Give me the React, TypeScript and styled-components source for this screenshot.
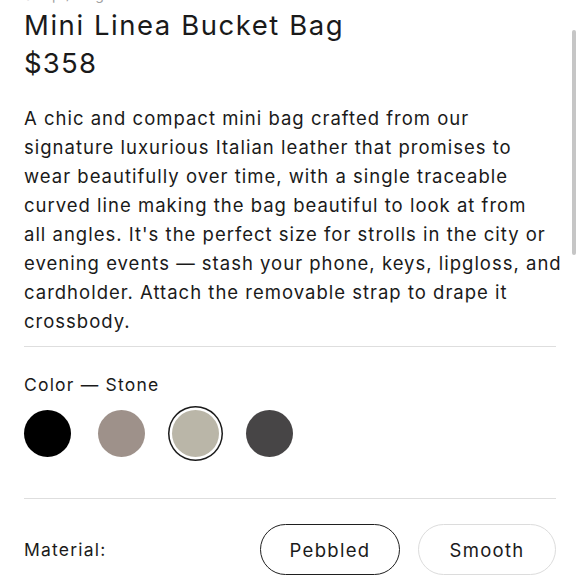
import React from "react";
import styled, { createGlobalStyle } from "styled-components";

const Global = createGlobalStyle`
  html, body { margin: 0; padding: 0; background: #fff; }
  body { font-family: Inter, "Noto Sans", sans-serif; color: #1a1a1a; overflow: hidden; }
  * { box-sizing: border-box; }
`;

const Page = styled.div`
  position: relative;
  width: 580px;
  height: 580px;
  overflow: hidden;
  padding: 0 24px;
`;

const Breadcrumb = styled.div`
  margin-top: -14px;
  font-size: 14px;
  line-height: 18px;
  letter-spacing: 0.8px;
  color: #a0a0a0;
`;

const Title = styled.h1`
  margin: 3px 0 0;
  font-size: 27.5px;
  font-weight: 400;
  line-height: 36px;
  letter-spacing: 1.55px;
`;

const Price = styled.div`
  font-size: 27.5px;
  line-height: 40px;
  letter-spacing: 1.2px;
`;

const Description = styled.p`
  margin: 21px 0 0;
  font-size: 18.5px;
  line-height: 29px;
  letter-spacing: 1px;
  width: 556px;
`;

const Divider = styled.hr`
  margin: 0;
  border: none;
  border-top: 1px solid #dedede;
  width: 532px;
`;

const Section = styled.div<{ $top: number; $bottom: number }>`
  padding-top: ${(p) => p.$top}px;
  padding-bottom: ${(p) => p.$bottom}px;
`;

const Label = styled.div`
  font-size: 17.5px;
  line-height: 22px;
  letter-spacing: 1.2px;
`;

const Swatches = styled.div`
  display: flex;
  gap: 27px;
  margin-top: 14px;
`;

const Swatch = styled.div<{ $color: string; $selected?: boolean }>`
  width: 47px;
  height: 47px;
  border-radius: 50%;
  background: ${(p) => p.$color};
  box-shadow: ${(p) =>
    p.$selected ? "0 0 0 2.5px #fff, 0 0 0 4px #1a1a1a" : "none"};
`;

const MaterialRow = styled.div`
  display: flex;
  align-items: center;
  justify-content: space-between;
  width: 532px;
`;

const Options = styled.div`
  display: flex;
  gap: 18px;
`;

const Pill = styled.button<{ $active?: boolean }>`
  width: ${(p) => (p.$active ? 140 : 138)}px;
  height: 51px;
  border-radius: 26px;
  background: #fff;
  border: ${(p) => (p.$active ? "1.5px solid #1f1f1f" : "1px solid #dcdcdc")};
  font-family: inherit;
  font-size: 18.5px;
  letter-spacing: 1.3px;
  color: #1a1a1a;
  padding: 0;
`;

const Scrollbar = styled.div`
  position: absolute;
  right: 4px;
  top: 30px;
  width: 4px;
  height: 225px;
  border-radius: 2px;
  background: #c6c6c6;
`;

export default function App() {
  return (
    <>
      <Global />
      <Page>
        <Breadcrumb>Shop / Bags</Breadcrumb>
        <Title>Mini Linea Bucket Bag</Title>
        <Price>$358</Price>
        <Description>
          A chic and compact mini bag crafted from our
          <br />
          signature luxurious Italian leather that promises to
          <br />
          wear beautifully over time, with a single traceable
          <br />
          curved line making the bag beautiful to look at from
          <br />
          all angles. It's the perfect size for strolls in the city or
          <br />
          evening events — stash your phone, keys, lipgloss, and
          <br />
          cardholder. Attach the removable strap to drape it
          <br />
          crossbody.
        </Description>
        <Section $top={10} $bottom={0}>
          <Divider />
        </Section>
        <Section $top={27} $bottom={41}>
          <Label>Color — Stone</Label>
          <Swatches>
            <Swatch $color="#000000" />
            <Swatch $color="#9e918a" />
            <Swatch $color="#bab6a8" $selected />
            <Swatch $color="#474546" />
          </Swatches>
        </Section>
        <Divider />
        <Section $top={25} $bottom={0}>
          <MaterialRow>
            <Label>Material:</Label>
            <Options>
              <Pill $active>Pebbled</Pill>
              <Pill>Smooth</Pill>
            </Options>
          </MaterialRow>
        </Section>
        <Scrollbar />
      </Page>
    </>
  );
}
